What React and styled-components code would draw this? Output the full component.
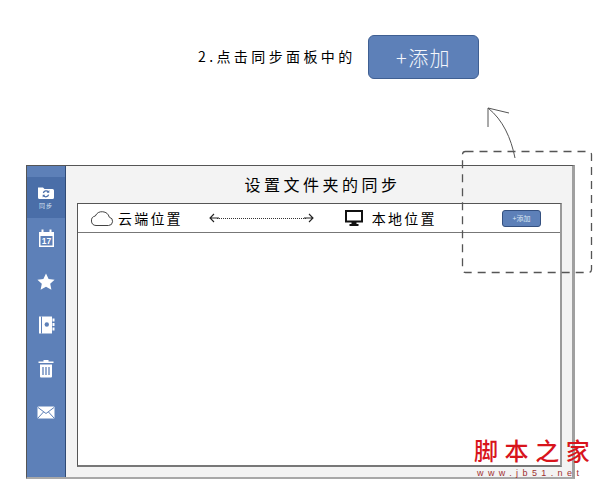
import styled, { createGlobalStyle } from "styled-components"

const Global = createGlobalStyle`
  html, body { margin: 0; padding: 0; background: #fff; }
  body { font-family: "Noto Sans CJK SC", "Noto Sans", sans-serif; }
`

const Page = styled.div`
  position: relative;
  width: 600px;
  height: 484px;
  overflow: hidden;
  padding: 35px 0 0 26px;
  box-sizing: border-box;
`

const Hint = styled.div`
  display: flex;
  align-items: center;
  height: 44px;
  margin-left: 172px;
  gap: 16px;
`

const HintText = styled.span`
  width: 154px;
  font-size: 14px;
  letter-spacing: 3.4px;
  color: #000;
  white-space: nowrap;
  margin-top: -2px;
`

const BigButton = styled.div`
  width: 111px;
  height: 44px;
  box-sizing: border-box;
  background: #5d80b8;
  border: 1px solid #3f5f92;
  border-radius: 6px;
  color: #f4f7fc;
  font-size: 20px;
  font-weight: 300;
  letter-spacing: 1.4px;
  display: flex;
  align-items: center;
  justify-content: center;
`

const Window = styled.div`
  display: flex;
  width: 549px;
  height: 314px;
  margin-top: 86px;
  box-sizing: border-box;
  border: 1px solid #555;
  border-right: 3px solid #a0a0a0;
  border-bottom: 2px solid #a8a8a8;
  background: #f3f3f3;
`

const Sidebar = styled.div`
  width: 38px;
  flex: none;
  background: #5d80b8;
  border-right: 1px solid #2f4a75;
  display: flex;
  flex-direction: column;
  padding-top: 11px;
`

const SideItem = styled.div`
  height: ${(p) => p.$h}px;
  background: ${(p) => (p.$active ? "#4a6ea8" : "transparent")};
  display: flex;
  flex-direction: column;
  align-items: center;
  justify-content: center;
  gap: 2px;
  color: #fff;
`

const SideLabel = styled.span`
  font-size: 6px;
  line-height: 8px;
  letter-spacing: 1px;
  color: #dbe5f3;
`

const Main = styled.div`
  flex: 1;
  display: flex;
  flex-direction: column;
  padding: 0 10px 10px 11px;
  min-width: 0;
`

const Title = styled.div`
  height: 37px;
  display: flex;
  align-items: center;
  justify-content: center;
  font-size: 16px;
  letter-spacing: 3.5px;
  color: #000;
  padding: 0 0 1px 6px;
  box-sizing: border-box;
  flex: none;
`

const Panel = styled.div`
  flex: 1;
  background: #fff;
  border: 1px solid #555;
  border-right: 2px solid #9a9a9a;
  border-bottom: 2px solid #777;
  display: flex;
  flex-direction: column;
`

const PanelHead = styled.div`
  height: 28px;
  flex: none;
  border-bottom: 1px solid #777;
  display: flex;
  align-items: center;
  padding: 0 19px 0 12px;
`

const Place = styled.div`
  display: flex;
  align-items: center;
  gap: ${(p) => p.$gap}px;
  font-size: 14px;
  letter-spacing: 2.2px;
  color: #000;
  white-space: nowrap;
`

const Route = styled.div`
  display: flex;
  align-items: center;
  width: 105px;
  margin: 0 31px 0 26px;
  color: #222;
`

const DottedLine = styled.div`
  flex: 1;
  border-top: 1px dotted #333;
  margin: 0 -3px;
`

const SmallButton = styled.div`
  width: 39px;
  height: 17px;
  margin-left: auto;
  box-sizing: border-box;
  background: #5d80b8;
  border: 1px solid #34507f;
  border-radius: 3px;
  color: #dbe5f3;
  font-size: 7px;
  display: flex;
  align-items: center;
  justify-content: center;
`

const Overlay = styled.svg`
  position: absolute;
  left: 0;
  top: 0;
  pointer-events: none;
`

const Watermark = styled.div`
  position: absolute;
  left: 474px;
  top: 435px;
  width: 120px;
  color: #d8141c;
`

const WatermarkName = styled.div`
  font-family: "Noto Sans CJK SC", sans-serif;
  font-size: 24px;
  font-weight: 500;
  line-height: 30px;
  letter-spacing: 6.6px;
  white-space: nowrap;
`

const WatermarkUrl = styled.div`
  font-family: "Liberation Sans", sans-serif;
  font-size: 9px;
  line-height: 10px;
  letter-spacing: 4.4px;
  margin: 3px 0 0 3px;
  color: #a03030;
  white-space: nowrap;
`

const SyncIcon = () => (
  <svg width="18" height="15" viewBox="0 0 18 15">
    <path d="M1 2.5 h5 l1.5 1.5 h8 a1.5 1.5 0 0 1 1.5 1.5 v7 a1.5 1.5 0 0 1 -1.5 1.5 h-13 a1.5 1.5 0 0 1 -1.5 -1.5z" fill="#fff" />
    <path d="M6.4 8 a2.8 2.8 0 0 1 5 -1 M11.6 9.6 a2.8 2.8 0 0 1 -5 1" fill="none" stroke="#4a6ea8" strokeWidth="1.3" />
    <path d="M12.3 5 v2.8 h-2.6z M5.7 12.6 v-2.8 h2.6z" fill="#4a6ea8" />
  </svg>
)

const CalendarIcon = () => (
  <svg width="17" height="19" viewBox="0 0 17 19">
    <path d="M1 3 h15 v15 h-15z" fill="#fff" />
    <rect x="3.5" y="0.5" width="2" height="4" fill="#fff" />
    <rect x="11.5" y="0.5" width="2" height="4" fill="#fff" />
    <rect x="2.5" y="7" width="12" height="9.5" fill="#5d80b8" />
    <text x="8.5" y="15.2" textAnchor="middle" fontSize="8.5" fontWeight="700" fill="#fff" fontFamily="Liberation Sans">17</text>
  </svg>
)

const StarIcon = () => (
  <svg width="18" height="17" viewBox="0 0 18 17">
    <path d="M9 0.5 l2.6 5.5 6 .7 -4.4 4.1 1.2 5.9 -5.4 -3 -5.4 3 1.2 -5.9 -4.4 -4.1 6 -.7z" fill="#fff" />
  </svg>
)

const BookIcon = () => (
  <svg width="17" height="18" viewBox="0 0 17 18">
    <path d="M1 0.5 h13 v17 h-13z" fill="#fff" />
    <rect x="3" y="0.5" width="1" height="17" fill="#5d80b8" />
    <circle cx="8.8" cy="8.5" r="2.2" fill="#5d80b8" />
    <rect x="14.5" y="2.5" width="2" height="3" fill="#fff" />
    <rect x="14.5" y="7" width="2" height="3" fill="#fff" />
    <rect x="14.5" y="11.5" width="2" height="3" fill="#fff" />
  </svg>
)

const TrashIcon = () => (
  <svg width="16" height="19" viewBox="0 0 16 19">
    <path d="M0.5 2.5 h5 v-1.5 h5 v1.5 h5 v1.5 h-15z" fill="#fff" />
    <path d="M2 5.5 h12 v12 a1 1 0 0 1 -1 1 h-10 a1 1 0 0 1 -1 -1z" fill="#fff" />
    <path d="M5 8 v8 M8 8 v8 M11 8 v8" stroke="#5d80b8" strokeWidth="1.3" />
  </svg>
)

const MailIcon = () => (
  <svg width="18" height="13" viewBox="0 0 18 13">
    <rect x="0.5" y="0.5" width="17" height="12" rx="1" fill="#fff" />
    <path d="M1 1.5 l8 6 8 -6 M1 12 l5.5 -6 M17 12 l-5.5 -6" fill="none" stroke="#5d80b8" strokeWidth="1" />
  </svg>
)

const CloudIcon = () => (
  <svg width="24" height="17" viewBox="0 0 24 17">
    <path d="M6 15.5 h12.5 a4.2 4.2 0 0 0 .8 -8.3 a7.5 7.5 0 0 0 -14 -1.2 a4.8 4.8 0 0 0 .7 9.5z" fill="none" stroke="#444" strokeWidth="1" />
  </svg>
)

const MonitorIcon = () => (
  <svg width="18" height="17" viewBox="0 0 18 17">
    <rect x="1" y="1" width="16" height="10.5" fill="#fff" stroke="#111" strokeWidth="2" />
    <path d="M6.5 12 h5 v2 h2 v2 h-9 v-2 h2z" fill="#111" />
  </svg>
)

const ArrowLeft = () => (
  <svg width="11" height="10" viewBox="0 0 11 10" style={{ flex: "none" }}>
    <path d="M10 5 H1 M5 1 L1 5 L5 9" fill="none" stroke="#222" strokeWidth="1.1" />
  </svg>
)

const ArrowRight = () => (
  <svg width="11" height="10" viewBox="0 0 11 10" style={{ flex: "none" }}>
    <path d="M1 5 H10 M6 1 L10 5 L6 9" fill="none" stroke="#222" strokeWidth="1.1" />
  </svg>
)

export default function App() {
  return (
    <Page>
      <Global />
      <Hint>
        <HintText>2.点击同步面板中的</HintText>
        <BigButton>+添加</BigButton>
      </Hint>
      <Window>
        <Sidebar>
          <SideItem $active $h={41}>
            <SyncIcon />
            <SideLabel>同步</SideLabel>
          </SideItem>
          <SideItem $h={41}><CalendarIcon /></SideItem>
          <SideItem $h={44}><StarIcon /></SideItem>
          <SideItem $h={44}><BookIcon /></SideItem>
          <SideItem $h={42}><TrashIcon /></SideItem>
          <SideItem $h={46}><MailIcon /></SideItem>
        </Sidebar>
        <Main>
          <Title>设置文件夹的同步</Title>
          <Panel>
            <PanelHead>
              <Place $gap={4}><CloudIcon />云端位置</Place>
              <Route>
                <ArrowLeft />
                <DottedLine />
                <ArrowRight />
              </Route>
              <Place $gap={9}><MonitorIcon />本地位置</Place>
              <SmallButton>+添加</SmallButton>
            </PanelHead>
          </Panel>
        </Main>
      </Window>
      <Overlay width="600" height="484" viewBox="0 0 600 484">
        <path d="M515 158 C511 138 503 120 488 108 M488 108 L488 127 M488 108 L509 113" fill="none" stroke="#555" strokeWidth="1" />
        <rect x="462.5" y="151.5" width="129" height="121" rx="3" fill="none" stroke="#555" strokeWidth="1.3" strokeDasharray="8 6" />
      </Overlay>
      <Watermark>
        <WatermarkName>脚本之家</WatermarkName>
        <WatermarkUrl>www.jb51.net</WatermarkUrl>
      </Watermark>
    </Page>
  )
}
